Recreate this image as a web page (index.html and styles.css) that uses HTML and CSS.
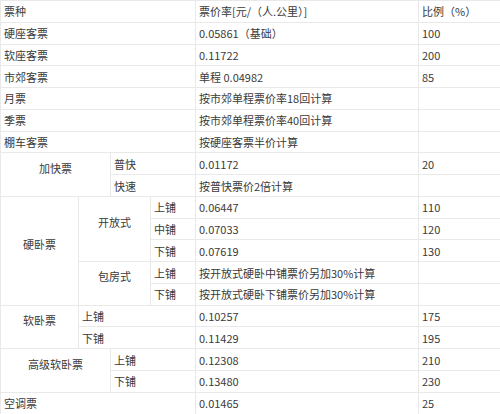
FILE: index.html
```html
<!DOCTYPE html>
<html lang="zh-CN">
<head>
<meta charset="utf-8">
<title>票价率</title>
<link rel="stylesheet" href="styles.css">
</head>
<body>
<table class="fare">
  <colgroup>
    <col class="c1"><col class="c2"><col class="c3"><col class="c4"><col class="c5"><col class="c6">
  </colgroup>
  <tbody>
    <tr><td colspan="4">票种</td><td>票价率[元/（人.公里）]</td><td>比例（%）</td></tr>
    <tr><td colspan="4">硬座客票</td><td>0.05861（基础）</td><td>100</td></tr>
    <tr><td colspan="4">软座客票</td><td>0.11722</td><td>200</td></tr>
    <tr><td colspan="4">市郊客票</td><td>单程 0.04982</td><td>85</td></tr>
    <tr><td colspan="4">月票</td><td>按市郊单程票价率18回计算</td><td></td></tr>
    <tr><td colspan="4">季票</td><td>按市郊单程票价率40回计算</td><td></td></tr>
    <tr><td colspan="4">棚车客票</td><td>按硬座客票半价计算</td><td></td></tr>
    <tr><td colspan="2" rowspan="2" class="merged">加快票</td><td colspan="2">普快</td><td>0.01172</td><td>20</td></tr>
    <tr><td colspan="2">快速</td><td>按普快票价2倍计算</td><td></td></tr>
    <tr><td rowspan="5" class="merged">硬卧票</td><td colspan="2" rowspan="3" class="merged">开放式</td><td>上铺</td><td>0.06447</td><td>110</td></tr>
    <tr><td>中铺</td><td>0.07033</td><td>120</td></tr>
    <tr><td>下铺</td><td>0.07619</td><td>130</td></tr>
    <tr><td colspan="2" rowspan="2" class="merged">包房式</td><td>上铺</td><td>按开放式硬卧中铺票价另加30%计算</td><td></td></tr>
    <tr><td>下铺</td><td>按开放式硬卧下铺票价另加30%计算</td><td></td></tr>
    <tr><td rowspan="2" class="merged">软卧票</td><td colspan="3">上铺</td><td>0.10257</td><td>175</td></tr>
    <tr><td colspan="3">下铺</td><td>0.11429</td><td>195</td></tr>
    <tr><td colspan="2" rowspan="2" class="merged">高级软卧票</td><td colspan="2">上铺</td><td>0.12308</td><td>210</td></tr>
    <tr><td colspan="2">下铺</td><td>0.13480</td><td>230</td></tr>
    <tr><td colspan="4">空调票</td><td>0.01465</td><td>25</td></tr>
  </tbody>
</table>
</body>
</html>
```
FILE: styles.css
```css
html, body {
  margin: 0;
  padding: 0;
  background: #ffffff;
}
.fare {
  width: 500px;
  table-layout: fixed;
  border-collapse: collapse;
  font-family: "Microsoft YaHei", "Noto Sans CJK SC", "Noto Sans", sans-serif;
  font-size: 11px;
  color: #3a3a3a;
}
.c1 { width: 78px; }
.c2 { width: 32px; }
.c3 { width: 40px; }
.c4 { width: 45px; }
.c5 { width: 223px; }
.c6 { width: 82px; }
.fare tr {
  height: 21.78px;
}
.fare td {
  border: 1px solid #e9e9e9;
  padding: 0 0 0 3px;
  white-space: nowrap;
  vertical-align: middle;
  line-height: 14px;
  overflow: hidden;
}
.fare td.merged {
  text-align: center;
  padding: 0 0 14px 0;
}
```
